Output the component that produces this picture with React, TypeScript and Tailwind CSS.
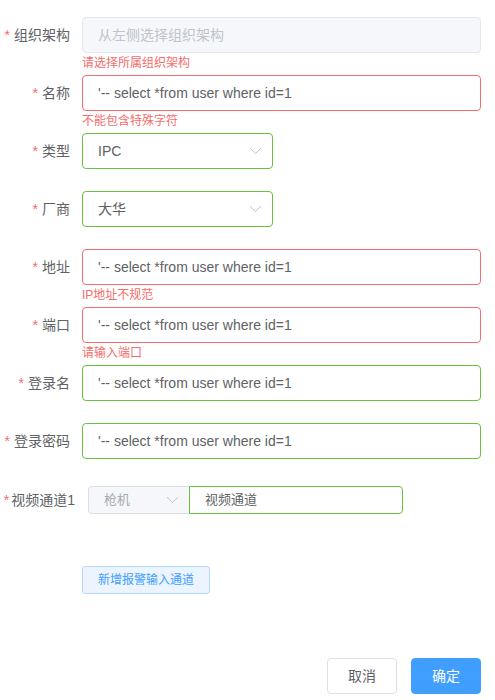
import React from "react";

const font = { fontFamily: '"Liberation Sans", "Noto Sans CJK SC", sans-serif' };

function Chevron({ className = "" }: { className?: string }) {
  return (
    <svg width="13" height="8" viewBox="0 0 13 8" className={className} fill="none">
      <path d="M1 1.2 L6.5 6.5 L12 1.2" stroke="#C0C4CC" strokeWidth="1" />
    </svg>
  );
}

function Label({ text, w = "w-[82px]" }: { text: string; w?: string }) {
  return (
    <div className={`${w} shrink-0 pr-3 text-right text-[14px] leading-[36px] text-[#606266] whitespace-nowrap`}>
      <span className="mr-1 text-[#F56C6C]">*</span>
      {text}
    </div>
  );
}

function Item({
  label,
  children,
  error,
}: {
  label: string;
  children: React.ReactNode;
  error?: string;
}) {
  return (
    <div className="mb-[22px] flex">
      <Label text={label} />
      <div className="relative flex-1">
        {children}
        {error && (
          <div className="absolute left-0 top-full pt-[4px] text-[12px] leading-none text-[#F56C6C]">
            {error}
          </div>
        )}
      </div>
    </div>
  );
}

function TextInput({ value, tone }: { value: string; tone: "error" | "success" }) {
  const border = tone === "error" ? "border-[#F56C6C]" : "border-[#67C23A]";
  return (
    <div
      className={`flex h-9 items-center rounded border ${border} bg-white pl-[15px] text-[14px] text-[#606266]`}
    >
      {value}
    </div>
  );
}

function SelectBox({ value }: { value: string }) {
  return (
    <div className="flex h-9 w-[191px] items-center justify-between rounded border border-[#67C23A] bg-white pl-[15px] pr-[10px] text-[14px] text-[#606266]">
      <span>{value}</span>
      <Chevron />
    </div>
  );
}

const sql = "'-- select *from user where id=1";

export default function App() {
  return (
    <div className="h-[700px] w-[495px] bg-white pr-[14px] pt-[17px]" style={font}>
      <Item label="组织架构" error="请选择所属组织架构">
        <div className="flex h-9 items-center rounded border border-[#E4E7ED] bg-[#F5F7FA] pl-[15px] text-[14px] text-[#C0C4CC]">
          从左侧选择组织架构
        </div>
      </Item>
      <Item label="名称" error="不能包含特殊字符">
        <TextInput value={sql} tone="error" />
      </Item>
      <Item label="类型">
        <SelectBox value="IPC" />
      </Item>
      <Item label="厂商">
        <SelectBox value="大华" />
      </Item>
      <Item label="地址" error="IP地址不规范">
        <TextInput value={sql} tone="error" />
      </Item>
      <Item label="端口" error="请输入端口">
        <TextInput value={sql} tone="error" />
      </Item>
      <Item label="登录名">
        <TextInput value={sql} tone="success" />
      </Item>
      <Item label="登录密码">
        <TextInput value={sql} tone="success" />
      </Item>

      <div className="mt-[27px] flex items-center">
        <div className="w-[88px] shrink-0 pr-[13px] text-right text-[14px] leading-[28px] text-[#606266] whitespace-nowrap">
          <span className="mr-[2px] text-[#F56C6C]">*</span>
          视频通道1
        </div>
        <div className="flex h-7 w-[315px]">
          <div className="flex w-[101px] items-center justify-between rounded-l border border-r-0 border-[#DCDFE6] bg-[#F5F7FA] pl-[15px] pr-[10px] text-[13px] text-[#A8ABB2]">
            <span>枪机</span>
            <Chevron />
          </div>
          <div className="flex flex-1 items-center rounded-r border border-[#67C23A] bg-white pl-[15px] text-[13px] text-[#606266]">
            视频通道
          </div>
        </div>
      </div>

      <div className="mt-[52px] pl-[82px]">
        <button className="h-7 w-[128px] rounded-[3px] border border-[#B3D8FF] bg-[#ECF5FF] text-[12px] text-[#409EFF]">
          新增报警输入通道
        </button>
      </div>

      <div className="mt-[64px] flex justify-end gap-[14px]">
        <button className="h-9 w-[70px] rounded border border-[#DCDFE6] bg-white text-[14px] text-[#606266]">
          取消
        </button>
        <button className="h-9 w-[70px] rounded border border-[#409EFF] bg-[#409EFF] text-[14px] text-white">
          确定
        </button>
      </div>
    </div>
  );
}
